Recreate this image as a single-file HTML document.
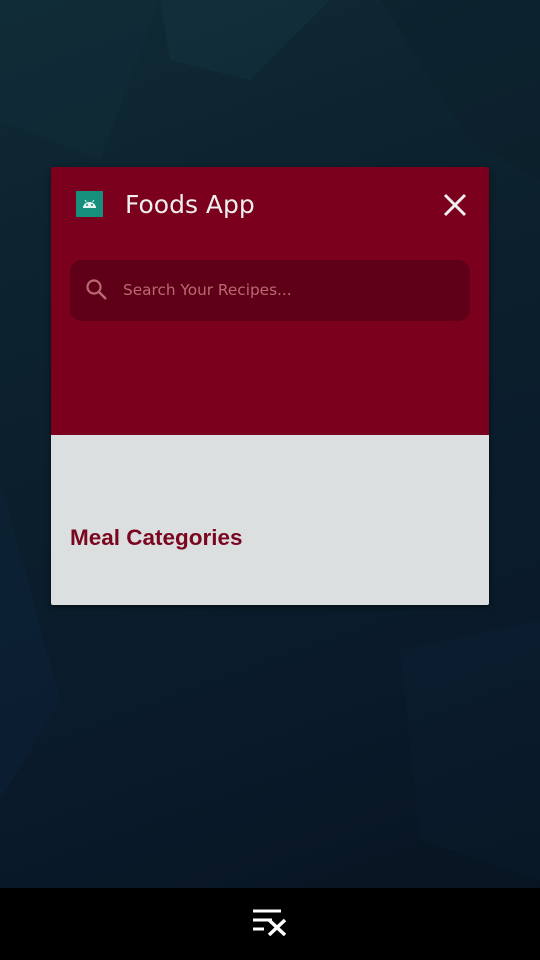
<!DOCTYPE html>
<html><head><style>
body{margin:0;width:540px;height:960px;overflow:hidden;background:linear-gradient(160deg,#0f2a35 0%,#0b1f2c 40%,#0a1a2b 70%,#07131f 100%);font-family:"Liberation Sans","DejaVu Sans",sans-serif;position:relative}
.card{position:absolute;left:51px;top:167px;width:438px;height:438px;border-radius:2px;overflow:hidden;box-shadow:0 2px 6px rgba(0,0,0,.5)}
.top{height:268px;background:#7a001d;position:relative}
.bottom{height:170px;background:#dcdfe0;position:relative}
.icon{position:absolute;left:25px;top:24px;width:27px;height:26px;background:#168f7d}
.title{position:absolute;left:74px;top:23px;color:#eee;font-size:25px;font-family:"DejaVu Sans",sans-serif}
.search{position:absolute;left:19px;top:93px;width:400px;height:61px;border-radius:12px;background:#5f0018}
.ph{position:absolute;left:53px;top:21px;color:#b86a70;font-size:15.3px;font-family:"DejaVu Sans",sans-serif}
.meal{position:absolute;left:19px;top:358px;color:#7a0620;font-size:22.5px;font-weight:bold;font-family:"Liberation Sans",sans-serif}
.nav{position:absolute;left:0;top:888px;width:540px;height:72px;background:#000}
</style></head><body>
<svg width="540" height="888" style="position:absolute;left:0;top:0;opacity:.25">
<polygon points="160,0 330,0 250,80 170,60" fill="#1d4050"/>
<polygon points="0,0 160,0 100,160 0,120" fill="#15323f"/>
<polygon points="380,0 540,0 540,180 470,140" fill="#0c1d28"/>
<polygon points="0,480 60,700 0,800" fill="#0e2a45"/>
<polygon points="400,650 540,620 540,880 420,840" fill="#0d2236"/>
</svg>
<div class="card">
<div class="top">
<div class="icon"><svg width="27" height="26"><path d="M7 17 a6.5 6 0 0 1 13 0 z" fill="#e8f5f0"/><circle cx="11" cy="14" r="1" fill="#168f7d"/><circle cx="16" cy="14" r="1" fill="#168f7d"/><path d="M9 9L10.5 11M18 9L16.5 11" stroke="#e8f5f0" stroke-width="1"/></svg></div>
<div class="title">Foods App</div>
<svg style="position:absolute;left:392px;top:26px" width="24" height="24"><path d="M2 2L22 22M22 2L2 22" stroke="#eee" stroke-width="3"/></svg>
<div class="search">
<svg style="position:absolute;left:16px;top:19px" width="22" height="22"><circle cx="8" cy="8" r="6.5" stroke="#b86a70" stroke-width="2.2" fill="none"/><path d="M13 13L20 20" stroke="#b86a70" stroke-width="2.5"/></svg>
<div class="ph">Search Your Recipes...</div></div>
</div>
<div class="bottom"></div>
<div class="meal">Meal Categories</div>
</div>
<div class="nav"><svg style="position:absolute;left:252px;top:20px" width="36" height="30"><path d="M1 3H29M1 12H20M1 21H12" stroke="#fff" stroke-width="3"/><path d="M17 12L33 27M33 12L17 27" stroke="#fff" stroke-width="3.5"/></svg></div>
</body></html>
